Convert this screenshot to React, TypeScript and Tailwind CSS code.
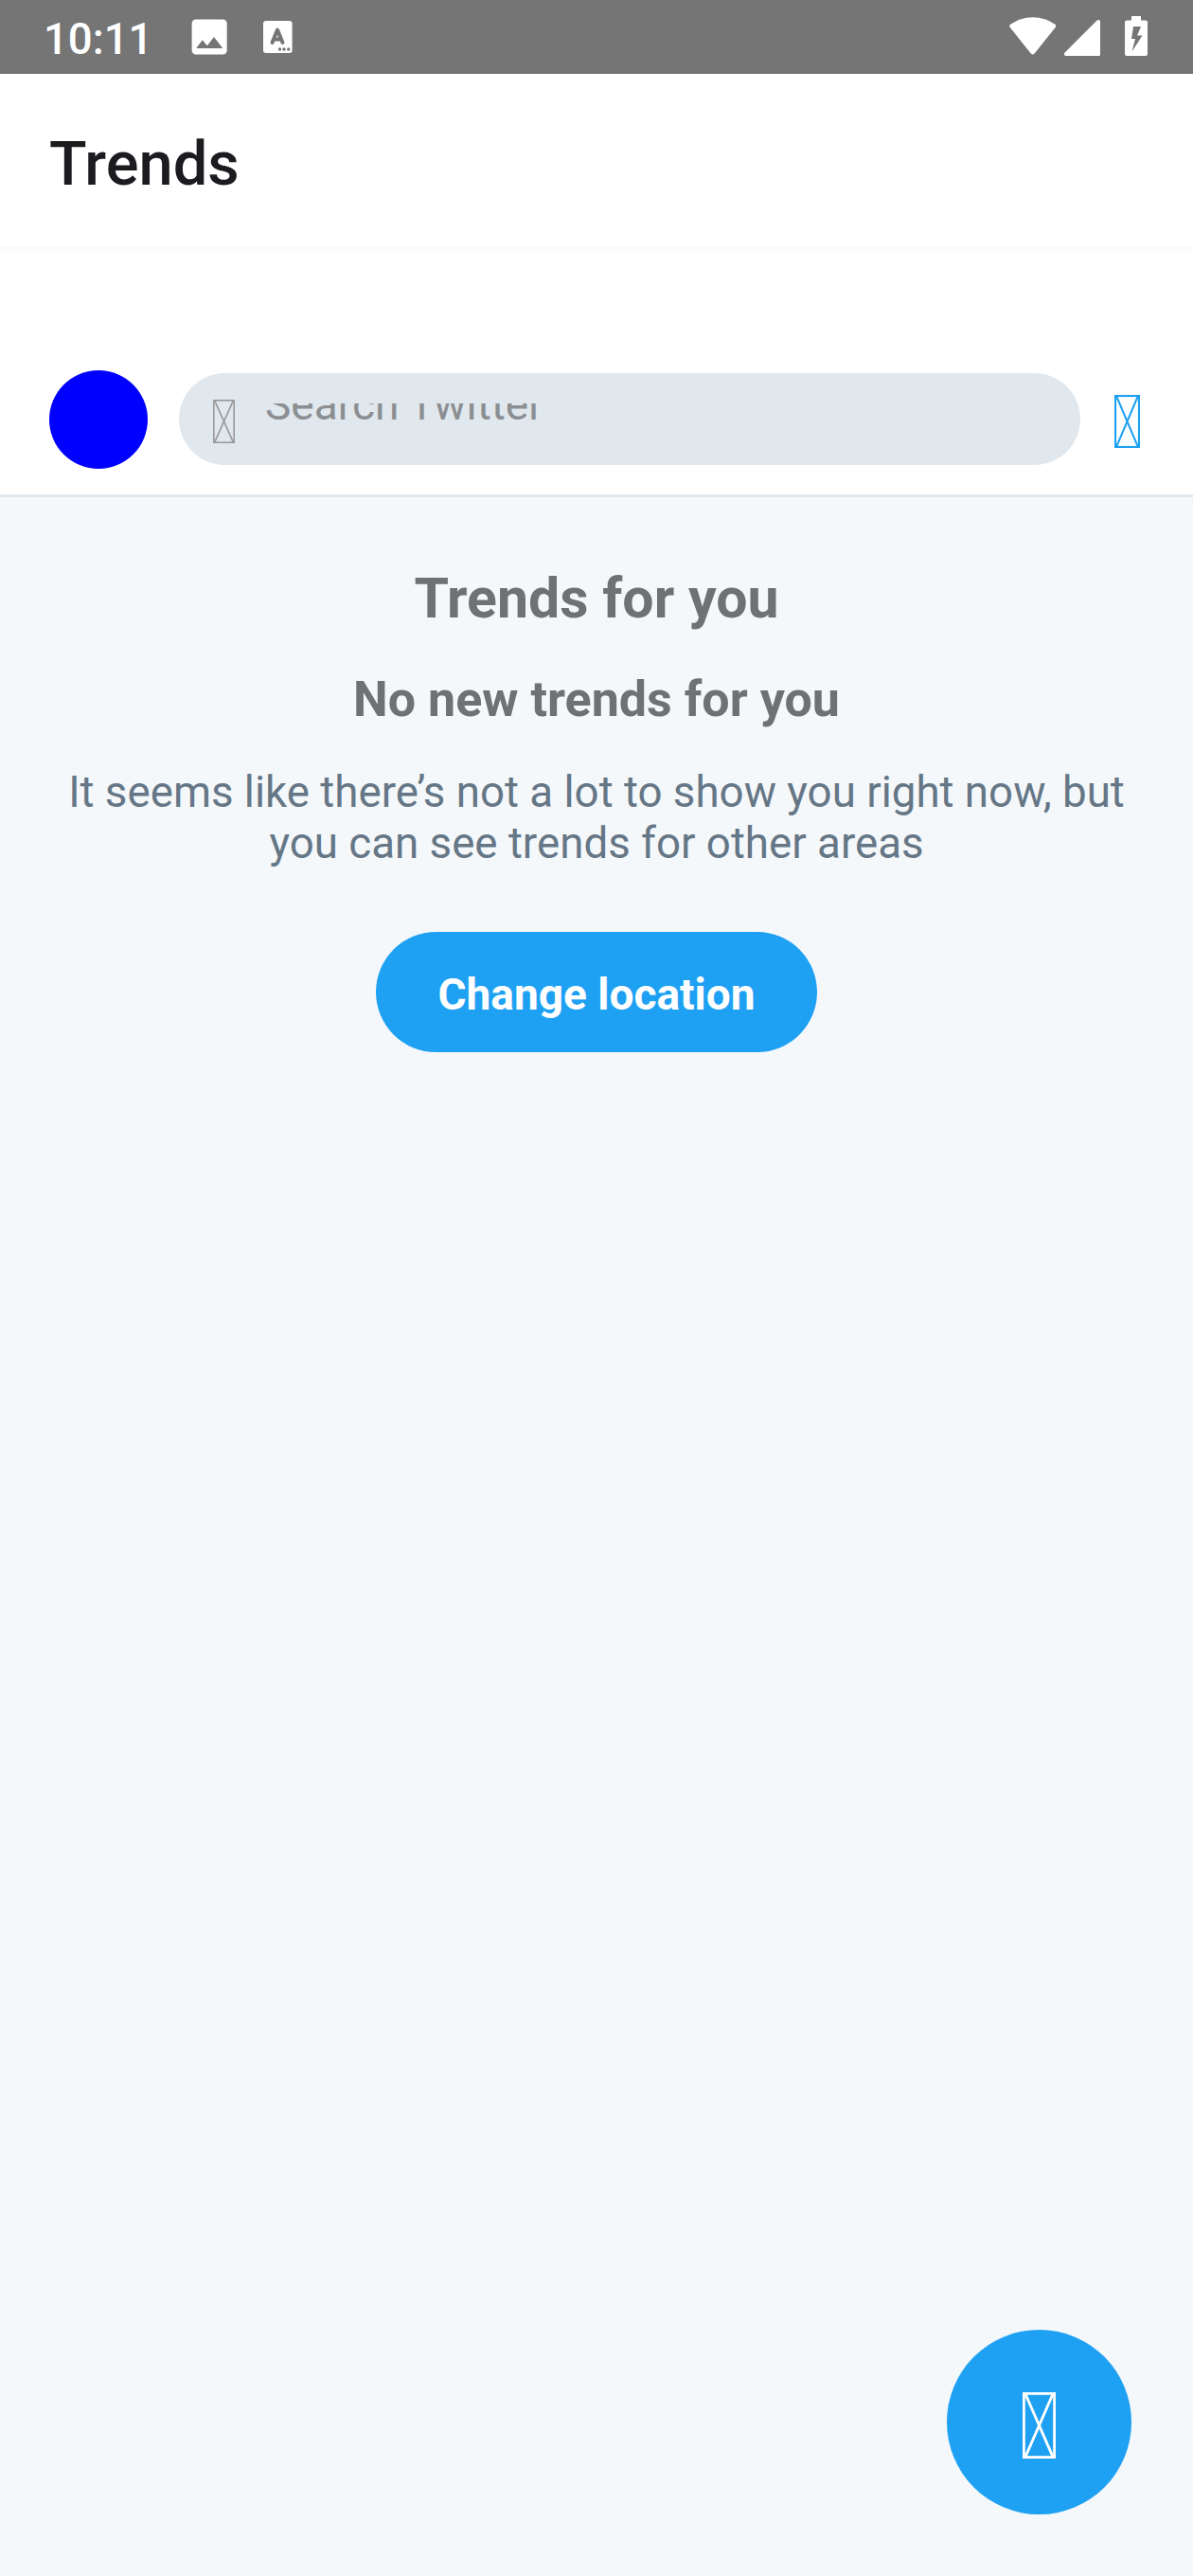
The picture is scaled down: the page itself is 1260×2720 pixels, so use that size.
function MissingGlyph({ width, height, stroke, className }: { width: number; height: number; stroke: number; className: string }) {
  const h = stroke / 2;
  return (
    <svg width={width} height={height} viewBox={`0 0 ${width} ${height}`} fill="none" stroke="currentColor" className={className}>
      <rect x={h} y={h} width={width - stroke} height={height - stroke} strokeWidth={stroke} />
      <path d={`M${stroke} ${h}L${width - stroke} ${height - h}M${width - stroke} ${h}L${stroke} ${height - h}`} strokeWidth={stroke} />
    </svg>
  );
}

function StatusBar() {
  return (
    <div className="flex h-[78px] shrink-0 items-start bg-[#757575] text-white">
      <span className="ml-[46px] mt-[12px] w-[156px] text-[45.5px] leading-[60px] font-medium">10:11</span>
      <svg className="mt-5 h-[38px] w-[38px]" viewBox="0 0 38 38">
        <path fill="currentColor" fillRule="evenodd" d="M4.8.5h28.7a4.2 4.2 0 0 1 4.2 4.2v28.6a4.2 4.2 0 0 1-4.2 4.2H4.8a4.2 4.2 0 0 1-4.2-4.2V4.7A4.2 4.2 0 0 1 4.8.5ZM5.2 31h28L24 19l-7.2 9.2-5-6Z" />
      </svg>
      <svg className="mt-[22px] ml-[38px] h-[34px] w-[31px]" viewBox="0 0 31 34">
        <rect width="30.6" height="34" rx="3" fill="currentColor" />
        <path d="M9.5 23 15 9.5 20.500 23M11.5 19.5h7" fill="none" stroke="#757575" strokeWidth="4" strokeLinecap="round" strokeLinejoin="round" />
        <g fill="#757575">
          <circle cx="17.5" cy="30" r="1.7" />
          <circle cx="22" cy="30" r="1.7" />
          <circle cx="26.7" cy="30" r="1.7" />
        </g>
      </svg>
      <svg className="ml-auto mt-[18px] h-10 w-[50px]" viewBox="0 0 50 40">
        <path fill="currentColor" d="M.6 10.8Q-.5 9 1.2 7.7Q11.5.2 24.7.2T48.4 7.7Q49.9 9 48.8 10.8L26.4 38.8Q24.7 40.4 23 38.8Z" />
      </svg>
      <svg className="ml-[8px] mt-[21px] h-[38px] w-[38px]" viewBox="0 0 38 38">
        <path fill="currentColor" d="M.6 34.4 34.6.6Q36-.4 37.4.2L38 1.4V36.5Q38 38 36.5 38H1.5Q-.6 37 0 35.2Z" />
      </svg>
      <svg className="ml-[26px] mr-12 mt-[17px] h-[42px] w-6" viewBox="0 0 24 42">
        <path fill="currentColor" fillRule="evenodd" d="M7 0h10v4.5h5Q24 4.5 24 6.5V40q0 2-2 2H2q-2 0-2-2V6.500Q0 4.500 2 4.500H7ZM9 11 7 24h4L7.500 37.500 18.500 20.500H13L17 11Z" />
      </svg>
    </div>
  );
}

export default function App() {
  return (
    <div className="relative flex h-[2720px] w-[1260px] flex-col overflow-hidden bg-[#f5f8fb] font-['Roboto',sans-serif]">
      <StatusBar />
      <header className="flex h-[182px] shrink-0 items-start bg-white pl-[52px]">
        <h1 className="mt-[55px] text-[65px] leading-[80px] font-medium text-[#1c1b1f]">Trends</h1>
      </header>
      <div className="h-[14px] shrink-0 bg-linear-to-b from-[#fbfbfb] to-white" />
      <div className="flex h-[251px] shrink-0 items-start border-b-3 border-[#e1e8ed] bg-white pt-[117px] pl-[52px]">
        <div className="size-[104px] rounded-full bg-[#0000ff]" />
        <div className="mt-[3px] ml-[33px] flex h-[97px] w-[952px] items-start rounded-full bg-[#e0e7ed] pl-9">
          <MissingGlyph width={23} height={46} stroke={1.6} className="mt-7 text-[#999999]" />
          <div className="mt-8 ml-[32px] h-[33px] overflow-hidden">
            <div className="-mt-[29px] text-[46px] leading-[60px] text-[#8b8f92]">Search Twitter</div>
          </div>
        </div>
        <MissingGlyph width={27} height={56} stroke={2.1} className="mt-[26px] ml-9 text-[#1da1f2]" />
      </div>
      <main className="flex flex-col items-center text-center">
        <h2 className="mt-[72px] text-[59px] leading-[70px] font-bold text-[#707173]">Trends for you</h2>
        <h3 className="mt-[39px] text-[52px] leading-[66px] font-bold text-[#707173]">No new trends for you</h3>
        <p className="mt-[38px] w-[1156px] text-[45.7px] leading-[54px] text-[#657786]">
          It seems like there’s not a lot to show you right now, but
          <br />
          you can see trends for other areas
        </p>
        <button className="mt-[66px] flex h-[127px] w-[466px] items-center justify-center rounded-full bg-[#1fa1f3] pt-1 text-[46px] leading-[60px] font-bold text-white">
          Change location
        </button>
      </main>
      <button className="absolute right-[65px] bottom-[65px] flex size-[195px] justify-center rounded-full bg-[#1fa1f3] pt-[66px]">
        <MissingGlyph width={35} height={70} stroke={2.8} className="text-white" />
      </button>
    </div>
  );
}
